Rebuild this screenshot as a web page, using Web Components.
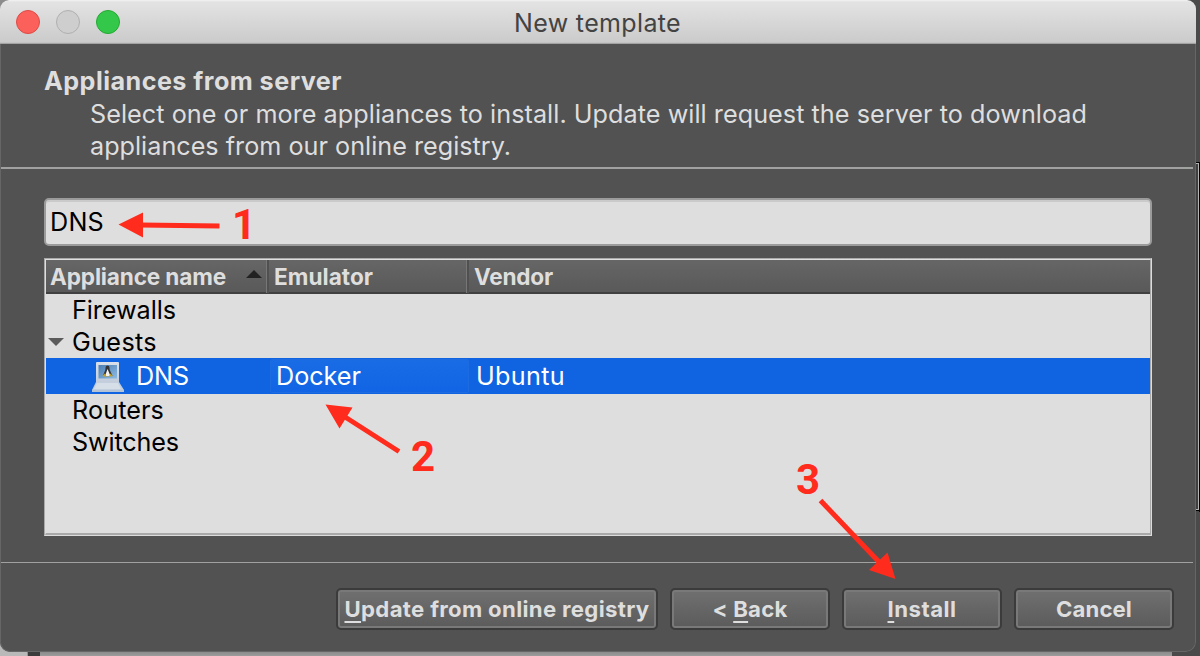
<!DOCTYPE html>
<html lang="en"><head><meta charset="utf-8"><title>New template</title>
<style>
html,body{margin:0;padding:0;width:1200px;height:656px;overflow:hidden;background:#484848}
body{font-family:Inter,"Liberation Sans",sans-serif}
</style></head><body>
<gns-desktop>
<gns-window>
  <gns-titlebar><fit-text w="166">New template</fit-text></gns-titlebar>
  <gns-intro>
    <fit-text slot="title" w="297">Appliances from server</fit-text>
    <fit-text w="996">Select one or more appliances to install. Update will request the server to download</fit-text>
    <fit-text w="420">appliances from our online registry.</fit-text>
  </gns-intro>
  <gns-search><fit-text w="53">DNS</fit-text></gns-search>
  <gns-tree></gns-tree>
  <gns-footer>
    <gns-button style="width:322px"><fit-text w="304"><u>U</u>pdate from online registry</fit-text></gns-button>
    <gns-button><fit-text w="74">&lt; <u>B</u>ack</fit-text></gns-button>
    <gns-button><fit-text w="68"><u>I</u>nstall</fit-text></gns-button>
    <gns-button><fit-text w="75">Cancel</fit-text></gns-button>
  </gns-footer>
</gns-window>
<gns-notes></gns-notes>
</gns-desktop>
<script>
const define = (name, html, init) => {
  const t = document.createElement('template');
  t.innerHTML = html;
  customElements.define(name, class extends HTMLElement {
    connectedCallback() {
      if (this.shadowRoot) return;
      this.attachShadow({mode: 'open'}).append(t.content.cloneNode(true));
      if (init) init(this);
    }
  });
};

define('gns-desktop', `<style>
:host{display:block;position:relative;width:1200px;height:656px;overflow:hidden;background:#4a4a4a}
.edge{position:absolute;left:1190px;top:162px;width:8px;height:347px;background:#3f3f3f;border:1px solid #000;border-right:0;box-sizing:content-box}
.edge i{position:absolute;inset:0 0 0 0;border:1px solid #b4b4b4}
.k{position:absolute;left:1199px;top:162px;width:1px;height:350px;background:#000}
.below{position:absolute;left:0;top:640px;width:1172px;height:16px;background:linear-gradient(#8b8b8b 12px,#9c9c9c)}
.corner{position:absolute;left:0;top:640px;width:27px;height:16px;background:#b9b9b9}
.bar{position:absolute;left:28px;top:640px;width:12px;height:16px;background:#3c3c3c}
.tl{position:absolute;left:0;top:0;width:20px;height:20px;background:#8c8c8c}
</style><div class="edge"><i></i></div><div class="k"></div><div class="below"></div><div class="corner"></div><div class="bar"></div><div class="tl"></div><slot></slot>`);

define('gns-window', `<style>
:host{position:relative;display:flex;flex-direction:column;box-sizing:border-box;width:1196px;height:652px;border-radius:9px 9px 10px 10px;background:#525252;overflow:hidden}
:host::after{content:"";position:absolute;inset:44px 0 0 0;border:1px solid #666;border-top:0;border-radius:0 0 10px 10px}
</style><slot></slot>`);

define('gns-titlebar', `<style>
:host{display:flex;flex:none;align-items:center;height:44px;box-sizing:border-box;border-bottom:1px solid #a3a3a3;background:linear-gradient(#f3f3f3 0,#e3e3e3 2px,#cbcbcb 42px,#bcbcbc);padding-left:16px;color:#434343;font-size:25px}
i{box-sizing:border-box;width:24px;height:24px;border:1px solid;border-radius:50%;margin-right:16px}
.r{background:#fc605b;border-color:#df4a45}.y{background:#cecece;border-color:#b0b0b0}.g{background:#34c84a;border-color:#23a932}
div{margin-left:378px;padding-top:3px}
</style><i class="r"></i><i class="y"></i><i class="g"></i><div><slot></slot></div>`);

define('gns-intro', `<style>
:host{display:block;flex:none;height:125px;box-sizing:border-box;border-bottom:2px solid #a0a2a0;padding:21px 0 0 44px;margin-right:3px;color:#dedede;font-size:25.2px}
.t{font-weight:700;height:33px}.b{padding-left:46px}
</style><div class="t"><slot name="title"></slot></div><div class="b"><slot></slot></div>`);

define('gns-search', `<style>
:host{display:flex;flex:none;align-items:center;box-sizing:border-box;width:1108px;height:48px;margin:29px 0 0 44px;border:2px solid #9b9b9b;border-radius:5px;background:#dedede;box-shadow:inset 0 2px #cacaca;padding:0 0 1px 4px;font-size:25.2px;color:#000}
</style><slot></slot>`);

define('gns-tree', `<style>
:host{display:block;flex:none;box-sizing:border-box;width:1108px;height:278px;margin:12px 0 0 44px;border:1px solid #dcdcdc;border-top-color:#a9a9a9;border-left-color:#a9a9a9;color:#000;font-size:25.2px}
.in{height:276px;box-sizing:border-box;border:1px solid #a9a9a9;border-top-color:#dedede;border-left-color:#dedede;border-bottom-width:2px;background:#dedede}
.head{display:grid;grid-template-columns:223px 200px 1fr;height:34px;box-sizing:border-box;border-bottom:2px solid #404040;background:linear-gradient(#666,#595959);color:#dedede;font-weight:700;font-size:22.6px}
.head div{display:flex;align-items:center;padding-left:5px;padding-top:1px;box-sizing:border-box;box-shadow:inset -2px 0 #505050,inset -3px 0 #777}
.head div:first-child{padding-left:4px}
.head div:last-child{box-shadow:none;padding-left:5px}
.head svg{margin:-7px 0 0 19px}
.row{display:grid;grid-template-columns:224px 199px 1fr;height:32px;align-items:center}
.row>div{display:flex;align-items:center}
.name{padding-left:26px}
.guest{padding-left:2px}.guest svg{margin-right:8px}
.sel{height:36px;background:#1064e2;color:#fff}
.sel .name{padding-left:46px}.sel .name svg{margin-right:12px}
.cell{box-sizing:border-box;height:34px;padding-left:5px;background:linear-gradient(#196ce4,#1165e5);border:1px solid #1d6be0;border-radius:2px}
.last{padding-left:7px}
</style>
<div class="in"><div class="head"><div><fit-text w="175">Appliance name</fit-text><svg width="18" height="10"><path d="M1 9L9 1L17 9Z" fill="#222"/></svg></div><div><fit-text w="98">Emulator</fit-text></div><div><fit-text w="78">Vendor</fit-text></div></div>
<div class="row"><div class="name"><fit-text w="103">Firewalls</fit-text></div></div>
<div class="row"><div class="guest"><svg width="16" height="10"><path d="M0 1H16L8 9Z" fill="#5b5b5b"/></svg><fit-text w="84">Guests</fit-text></div></div>
<div class="row sel"><div class="name"><svg width="32" height="32" viewBox="0 0 32 32"><defs><linearGradient id="s" x2="0" y2="1"><stop stop-color="#d9e0e9"/><stop offset="1" stop-color="#c3cddb"/></linearGradient><linearGradient id="b" x2="1" y2="1"><stop stop-color="#4c7eb4"/><stop offset="1" stop-color="#8dbbe2"/></linearGradient></defs><path d="M5 2H26Q27 2 27 3V22H4V3Q4 2 5 2Z" fill="url(#s)"/><path d="M6.500 5H25V18.500H6.500Z" fill="url(#b)"/><path d="M4 22H27L32 30V32H0V30Z" fill="#c3cfde"/><path d="M5 23H26L29 29H2Z" fill="#d6dee8"/><path d="M0 30H32V32H0Z" fill="#b4c3d5"/><path d="M15.500 5.500C13 5.500 13.700 8.500 13.300 10L10.800 16H20.500L17.800 10C17.300 8.500 18 5.500 15.500 5.500Z" fill="#333"/><path d="M15.500 9L13 16H18.500Z" fill="#f5f5f5"/><path d="M10.300 16L12.700 13.500L15 17ZM21 16L18.500 13.500L16.500 17Z" fill="#c0a02d"/></svg><fit-text w="52">DNS</fit-text></div><div class="cell"><fit-text w="84">Docker</fit-text></div><div class="last"><fit-text w="88">Ubuntu</fit-text></div></div>
<div class="row"><div class="name"><fit-text w="91">Routers</fit-text></div></div>
<div class="row"><div class="name"><fit-text w="106">Switches</fit-text></div></div></div>`);

define('gns-footer', `<style>
:host{display:flex;flex:none;justify-content:flex-end;gap:12px;height:90px;box-sizing:border-box;border-top:1px solid #a0a2a0;margin:26px 3px 0 0;padding:25px 19px 0 0}
</style><slot></slot>`);

define('gns-button', `<style>
:host{display:flex;align-items:center;justify-content:center;width:160px;height:42px;box-sizing:border-box;border:2px solid #3b3b3b;border-radius:5px;background:linear-gradient(#707070,#5b5b5b);box-shadow:inset 0 0 0 2px #797979;color:#dedede;font-weight:700;font-size:22.2px}
::slotted(*){text-underline-offset:4px}
</style><slot></slot>`);

// Registered after its containers, so that it measures in their fonts.
define('fit-text', `<style>:host{display:block;white-space:nowrap;line-height:32px}</style><slot></slot>`, el => {
  el.style.width = 'max-content';
  const want = +el.getAttribute('w');
  const gap = (want + 1 - el.getBoundingClientRect().width) / el.textContent.length;
  el.style.letterSpacing = gap.toFixed(3) + 'px';
});

define('gns-notes', `<style>
:host{position:absolute;inset:0;color:#ff2b1c;font:700 42px/42px Roboto,sans-serif}
svg{position:absolute;inset:0}span{position:absolute}
</style><svg width="1200" height="656"><g stroke="#ff2b1c" stroke-width="5" fill="#ff2b1c"><path d="M219.500 226L140 225M399 451.500L342 415M820.500 500.500L880 563"/><path stroke="none" d="M118.500 224.500L143 212.500V237.500ZM325.500 404.500L352.500 407.500L339.500 428.500ZM895.500 579L869 570L887.500 552.500Z"/></g></svg>
<span style="left:232px;top:204px">1</span><span style="left:411px;top:436px">2</span><span style="left:796px;top:459px">3</span>`);
</script></body></html>
